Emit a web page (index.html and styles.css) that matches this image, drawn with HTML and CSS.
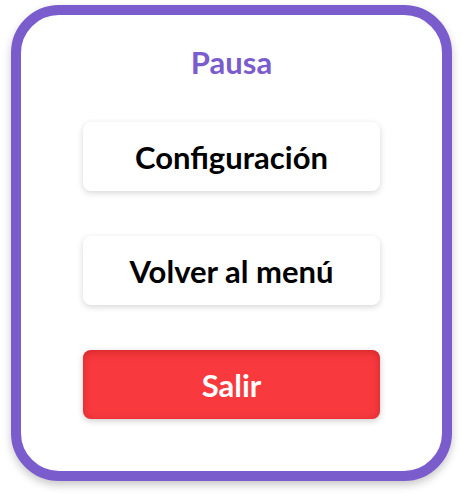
FILE: index.html
```html
<!DOCTYPE html>
<html lang="es">
<head>
<meta charset="utf-8">
<title>Pausa</title>
<link rel="stylesheet" href="styles.css">
</head>
<body>
<div class="card">
  <h1 class="title">Pausa</h1>
  <div class="menu">
    <button class="btn">Configuración</button>
    <button class="btn">Volver al menú</button>
    <button class="btn btn-danger">Salir</button>
  </div>
</div>
</body>
</html>
```
FILE: styles.css
```css
html, body {
  margin: 0;
  padding: 0;
  background: #ffffff;
}
body {
  width: 463px;
  height: 494px;
  font-family: "Lato", "Noto Sans", sans-serif;
}
.card {
  box-sizing: border-box;
  width: 441px;
  height: 476px;
  margin: 5px 0 0 11px;
  border: 10px solid #7a5ccd;
  border-radius: 48px;
  background: #ffffff;
  box-shadow: 0 4px 8px rgba(0, 0, 0, 0.22);
  display: flex;
  flex-direction: column;
  align-items: center;
}
.title {
  margin: 30px 0 0;
  font-size: 31px;
  line-height: 34px;
  font-weight: 700;
  color: #7a5ccd;
}
.menu {
  margin-top: 43px;
  display: flex;
  flex-direction: column;
  gap: 45px;
}
.btn {
  width: 297px;
  height: 69px;
  border: none;
  border-radius: 8px;
  background: #ffffff;
  box-shadow: 0 2px 6px rgba(0, 0, 0, 0.16);
  font-family: inherit;
  font-size: 31px;
  font-weight: 700;
  color: #000000;
  padding: 0;
}
.btn-danger {
  background: #f83a3f;
  color: #ffffff;
  box-shadow: inset 0 2px 8px rgba(140, 0, 0, 0.35), 0 2px 6px rgba(0, 0, 0, 0.2);
}
```
